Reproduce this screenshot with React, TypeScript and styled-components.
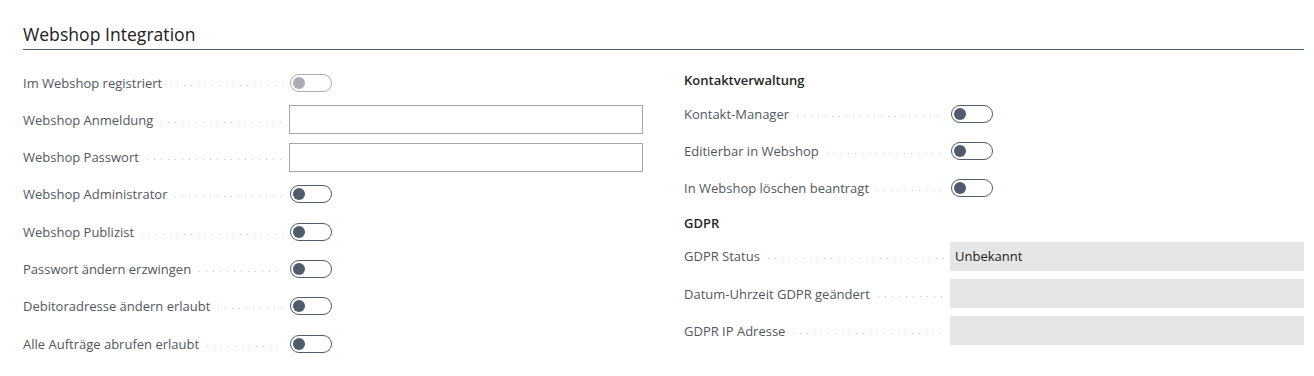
import React from 'react'
import styled, { createGlobalStyle } from 'styled-components'

const GlobalStyle = createGlobalStyle`
    body{
        margin:0;
        background:#fff;
        font-family:'Segoe UI', 'Open Sans', sans-serif;
    }
`

type Field =
    | { label: string; kind: 'toggle'; disabled?: boolean }
    | { label: string; kind: 'input' }
    | { label: string; kind: 'readonly'; value?: string }

const leftFields: Field[] = [
    { label: 'Im Webshop registriert', kind: 'toggle', disabled: true },
    { label: 'Webshop Anmeldung', kind: 'input' },
    { label: 'Webshop Passwort', kind: 'input' },
    { label: 'Webshop Administrator', kind: 'toggle' },
    { label: 'Webshop Publizist', kind: 'toggle' },
    { label: 'Passwort ändern erzwingen', kind: 'toggle' },
    { label: 'Debitoradresse ändern erlaubt', kind: 'toggle' },
    { label: 'Alle Aufträge abrufen erlaubt', kind: 'toggle' },
]

const contactFields: Field[] = [
    { label: 'Kontakt-Manager', kind: 'toggle' },
    { label: 'Editierbar in Webshop', kind: 'toggle' },
    { label: 'In Webshop löschen beantragt', kind: 'toggle' },
]

const gdprFields: Field[] = [
    { label: 'GDPR Status', kind: 'readonly', value: 'Unbekannt' },
    { label: 'Datum-Uhrzeit GDPR geändert', kind: 'readonly' },
    { label: 'GDPR IP Adresse', kind: 'readonly' },
]

function FieldRow({ field }: { field: Field }) {
    return (
        <Row>
            <Label>
                <span>{field.label}</span>
                <Leader />
            </Label>
            {field.kind === 'toggle' && (
                <Toggle $disabled={field.disabled}>
                    <Knob $disabled={field.disabled} />
                </Toggle>
            )}
            {field.kind === 'input' && <TextBox />}
            {field.kind === 'readonly' && <ReadOnlyBox>{field.value}</ReadOnlyBox>}
        </Row>
    )
}

export default function App() {
    return (
        <>
            <GlobalStyle />
            <Page>
                <Title>Webshop Integration</Title>
                <Columns>
                    <Column>
                        {leftFields.map(f => <FieldRow key={f.label} field={f} />)}
                    </Column>
                    <Column>
                        <GroupTitle>Kontaktverwaltung</GroupTitle>
                        {contactFields.map(f => <FieldRow key={f.label} field={f} />)}
                        <GroupTitle>GDPR</GroupTitle>
                        {gdprFields.map(f => <FieldRow key={f.label} field={f} />)}
                    </Column>
                </Columns>
            </Page>
        </>
    )
}

const Page = styled.main`
    width:1314px;
    box-sizing:border-box;
    padding:22px 10px 0 23px;
`

const Title = styled.h2`
    margin:0;
    font-size:17.6px;
    font-weight:400;
    color:#212121;
    line-height:24px;
    padding-bottom:3px;
    border-bottom:1px solid #505c6d;
`

const Columns = styled.div`
    display:grid;
    grid-template-columns:620px 620px;
    column-gap:41px;
    padding-top:18px;
`

const Column = styled.div`
    display:flex;
    flex-direction:column;
`

const GroupTitle = styled.div`
    font-size:13px;
    font-weight:600;
    color:#262626;
    height:24px;
    line-height:24px;
    margin-bottom:7px;
`

const Row = styled.div`
    display:flex;
    align-items:center;
    height:29px;
    margin-bottom:8.3px;
`

const Label = styled.div`
    width:266px;
    flex:none;
    display:flex;
    align-items:center;
    font-size:13px;
    color:#52575e;
    white-space:nowrap;
    padding-right:6px;
    box-sizing:border-box;
`

const Leader = styled.span`
    flex:1;
    height:1px;
    margin-left:8px;
    margin-top:5px;
    background-image:linear-gradient(to right, #c4c8ce 1px, transparent 1px);
    background-size:7px 1px;
    background-repeat:repeat-x;
    background-position:left center;
`

const Toggle = styled.div<{ $disabled?: boolean }>`
    width:42px;
    height:18px;
    box-sizing:border-box;
    margin-left:1px;
    border:1px solid ${p => (p.$disabled ? '#a9acb2' : '#505c6d')};
    border-radius:9px;
    display:flex;
    align-items:center;
    padding:0 2px;
`

const Knob = styled.span<{ $disabled?: boolean }>`
    width:12px;
    height:12px;
    border-radius:50%;
    background:${p => (p.$disabled ? '#a9acb6' : '#505c6d')};
`

const TextBox = styled.div`
    width:354px;
    height:29px;
    box-sizing:border-box;
    border:1px solid #a6a6a6;
    background:#fff;
`

const ReadOnlyBox = styled.div`
    width:354px;
    height:29px;
    box-sizing:border-box;
    background:#e6e6e6;
    padding:0 5px;
    font-size:13px;
    line-height:29px;
    color:#212121;
`
